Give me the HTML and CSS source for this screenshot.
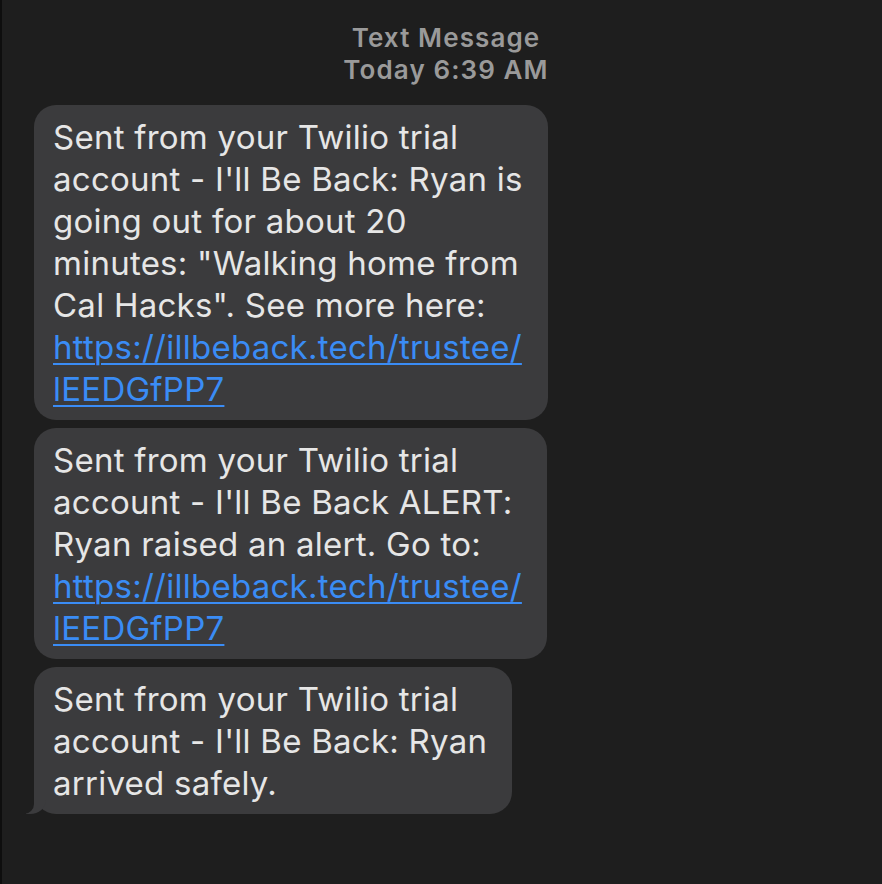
FILE: index.html
```html
<!DOCTYPE html>
<html lang="en">
<head>
  <meta charset="UTF-8">
  <meta name="viewport" content="width=device-width, initial-scale=1">
  <title>Messages</title>
  <link rel="stylesheet" href="styles.css">
</head>
<body>
  <div class="thread">
    <div class="header">
      <div>Text Message</div>
      <div>Today 6:39 AM</div>
    </div>

    <div class="bubble">
      Sent from your Twilio trial<br>
      account - I'll Be Back: Ryan is<br>
      going out for about 20<br>
      minutes: "Walking home from<br>
      Cal Hacks". See more here:<br>
      <a href="#">https://illbeback.tech/trustee/<br>lEEDGfPP7</a>
    </div>

    <div class="bubble">
      Sent from your Twilio trial<br>
      account - I'll Be Back ALERT:<br>
      Ryan raised an alert. Go to:<br>
      <a href="#">https://illbeback.tech/trustee/<br>lEEDGfPP7</a>
    </div>

    <div class="bubble last">
      Sent from your Twilio trial<br>
      account - I'll Be Back: Ryan<br>
      arrived safely.
    </div>
  </div>
</body>
</html>
```

FILE: styles.css
```css
body {
  margin: 0;
  background-color: #1e1e1e;
  font-family: Inter, 'Noto Sans', sans-serif;
  height: 100vh;
  border-left: 2px solid #0e0e0e;
}

.thread {
  display: flex;
  flex-direction: column;
  align-items: flex-start;
  gap: 8px;
  padding: 22px 0 0 32px;
}

.header {
  width: 300px;
  margin-left: 262px;
  margin-bottom: 11px;
  text-align: center;
  color: #9a9a9a;
  font-size: 26px;
  font-weight: 600;
  letter-spacing: 1.1px;
  line-height: 32px;
}

.bubble {
  position: relative;
  background-color: #3b3b3d;
  color: #e6e6e6;
  font-size: 33px;
  letter-spacing: 0.25px;
  line-height: 42px;
  padding: 11px 25px 10px 19px;
  border-radius: 22px;
}

.bubble a {
  color: #3a8cf5;
  text-decoration: underline;
  text-decoration-thickness: 2px;
  text-underline-offset: 4px;
}

/* tail on the last bubble */
.last::before {
  content: "";
  position: absolute;
  bottom: 0;
  left: -8px;
  width: 20px;
  height: 22px;
  background: #3b3b3d;
  border-bottom-right-radius: 16px 14px;
}

.last::after {
  content: "";
  position: absolute;
  bottom: 0;
  left: -26px;
  width: 26px;
  height: 22px;
  background: #1e1e1e;
  border-bottom-right-radius: 10px;
}
```
